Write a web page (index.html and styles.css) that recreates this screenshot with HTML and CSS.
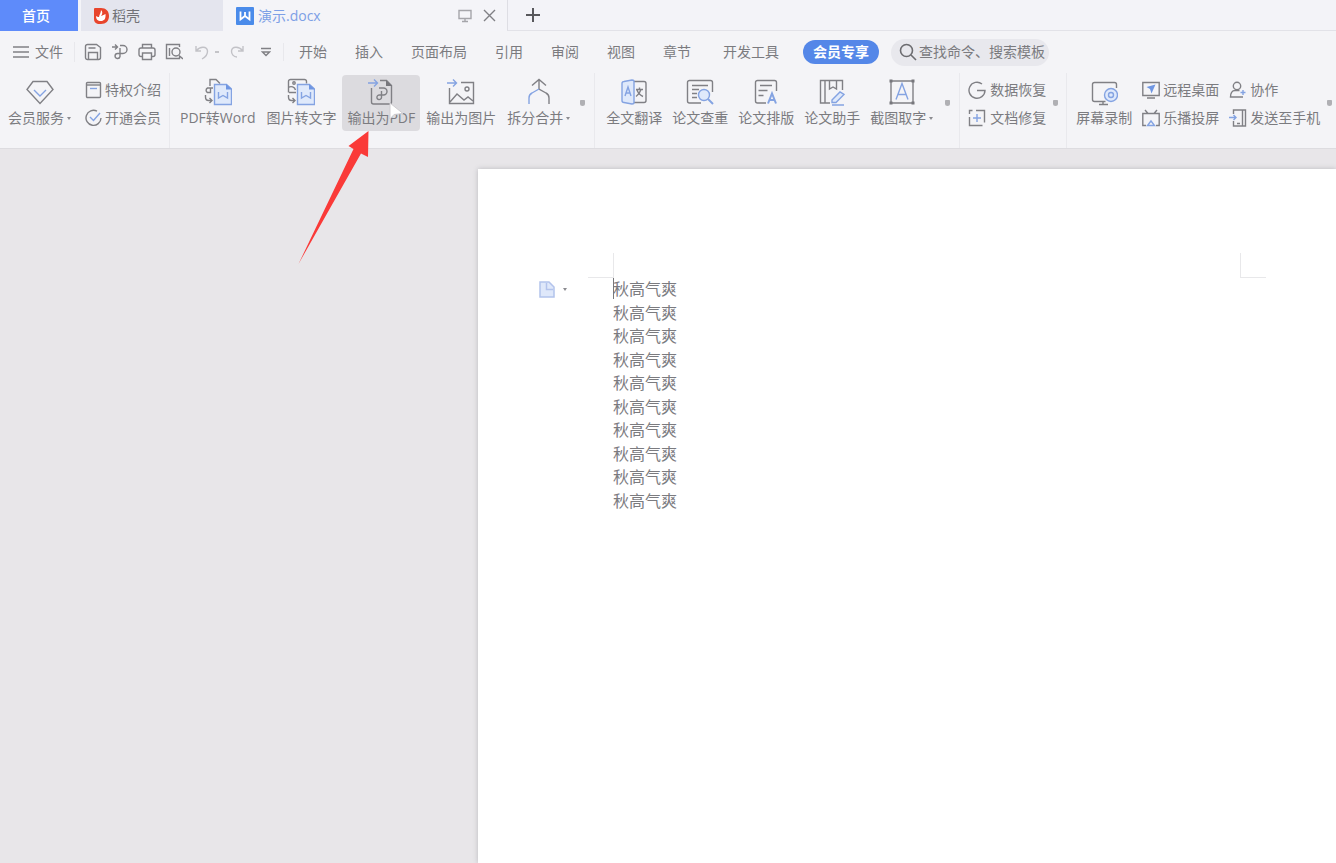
FILE: index.html
```html
<!DOCTYPE html>
<html lang="zh-CN">
<head>
<meta charset="utf-8">
<title>演示.docx</title>
<link rel="stylesheet" href="styles.css">
</head>
<body>
<div class="app">
  <header class="tabs">
    <button class="tab tab-home">首页</button>
    <button class="tab tab-docer">
      <svg width="16" height="18" viewBox="0 0 16 18"><path d="M2 1h6c5 0 8 3 8 8s-3 8-8 8H5a5 5 0 0 1-4-5V2a1 1 0 0 1 1-1z" fill="#e8452c"/><path d="M8 3c2 2 1.500 4 0 6 2-.5 3-1.500 4.500-2 .5 5-1.500 7-4.500 7-3.500 0-5-2-5-5 1 .8 2 1 3 1 .3-2.500 2-4 2-7z" fill="#fff"/></svg>
      <span>稻壳</span>
    </button>
    <div class="tab tab-doc">
      <svg width="18" height="18" viewBox="0 0 18 18"><rect width="18" height="18" rx="1" fill="#4a8bea"/><path d="M4.500 4.500v8l4.500-3.500 4.500 3.500v-8M9 5v4" fill="none" stroke="#fff" stroke-width="1.800"/></svg>
      <span class="tab-name">演示.docx</span>
      <button class="icon-btn" aria-label="窗口"><svg width="14" height="14" viewBox="0 0 14 14" class="ico light"><path d="M1 1.500h12v8H1zM7 10v2M4 12.500h6"/></svg></button>
      <button class="icon-btn" aria-label="关闭"><svg width="13" height="13" viewBox="0 0 13 13" class="ico"><path d="M1 1l11 11M12 1L1 12"/></svg></button>
    </div>
    <div class="tab-rest">
      <button class="icon-btn" aria-label="新建"><svg width="14" height="14" viewBox="0 0 14 14" class="ico bold"><path d="M7 0v14M0 7h14"/></svg></button>
    </div>
  </header>

  <nav class="menu">
    <button class="file-btn"><svg width="16" height="12" viewBox="0 0 16 12" class="ico"><path d="M0 1h16M0 6h16M0 11h16"/></svg><span>文件</span></button>
    <div class="quick">
      <button class="icon-btn" aria-label="保存"><svg width="18" height="18" viewBox="0 0 18 18" class="ico"><path d="M3.500 1.500h9l4 3v10a2 2 0 0 1-2 2h-11a2 2 0 0 1-2-2v-11a2 2 0 0 1 2-2zM4.500 16V9.500h9V16M4.500 5h7"/></svg></button>
      <button class="icon-btn" aria-label="输出为PDF"><svg width="18" height="18" viewBox="0 0 18 18" class="ico"><path d="M1 4h5M4 1.500L6.500 4 4 6.500M9 2.500h3a4 4 0 0 1 0 8H6.500a2.500 2.500 0 1 0 2.500 3V5"/></svg></button>
      <button class="icon-btn" aria-label="打印"><svg width="18" height="18" viewBox="0 0 18 18" class="ico"><path d="M4.500 5V1.500h9V5M4 13.500H3a2 2 0 0 1-2-2V7a2 2 0 0 1 2-2h12a2 2 0 0 1 2 2v4.500a2 2 0 0 1-2 2h-1M4.500 10h9v6.500h-9z"/></svg></button>
      <button class="icon-btn" aria-label="打印预览"><svg width="18" height="18" viewBox="0 0 18 18" class="ico"><path d="M14.500 4V1.500h-13v14h13v-2M14 12.500l4 3.500M4.500 5v8"/><circle cx="11" cy="9" r="4"/></svg></button>
      <button class="icon-btn undo" aria-label="撤销"><svg width="14" height="16" viewBox="0 0 14 16" class="ico faint"><path d="M1 2v5h5M1.500 6.500C5 2 12 2 12.500 7c.2 3-2 6-5.500 8"/></svg><i class="dot"></i></button>
      <button class="icon-btn redo" aria-label="重做"><svg width="14" height="16" viewBox="0 0 14 16" class="ico faint"><path d="M13 2v5H8M12.500 6.500C9 2 2 2 1.500 7c-.2 3 2 6 5.500 6"/></svg></button>
      <button class="icon-btn more" aria-label="更多"><svg width="10" height="10" viewBox="0 0 10 10" class="ico"><path d="M0 1.500h10M1.500 5L5 8.500 8.500 5z"/></svg></button>
    </div>
    <div class="menu-items">
      <button>开始</button><button>插入</button><button>页面布局</button><button>引用</button><button>审阅</button><button>视图</button><button>章节</button>
    </div>
    <button class="dev">开发工具</button>
    <button class="vip">会员专享</button>
    <label class="search">
      <svg width="18" height="18" viewBox="0 0 18 18" class="ico dark"><circle cx="7.500" cy="7.500" r="6"/><path d="M12 12l5 5"/></svg>
      <input type="text" placeholder="查找命令、搜索模板" aria-label="查找命令、搜索模板">
    </label>
  </nav>

  <section class="ribbon">
    <div class="group g-member">
      <button class="big">
        <svg width="28" height="28" viewBox="0 0 28 28" class="ico"><path d="M7 3.500h14l6 8-13 14-13-14z"/><path class="b" d="M8 12l6 6 6-6"/></svg>
        <span class="lbl">会员服务<i class="caret"></i></span>
      </button>
      <div class="col">
        <button class="small"><svg width="17" height="18" viewBox="0 0 17 18" class="ico"><rect x="1.500" y="1.500" width="14" height="15" rx="1"/><path d="M2 4h13"/><path class="b" d="M5 7.500h7"/></svg>特权介绍</button>
        <button class="small"><svg width="17" height="18" viewBox="0 0 17 18" class="ico"><path d="M12 2.200A7.500 7.500 0 1 0 16 9"/><path class="b" d="M5 8l3.500 3.500L15 4"/></svg>开通会员</button>
      </div>
    </div>

    <div class="group g-convert">
      <button class="big">
        <svg width="28" height="28" viewBox="0 0 28 28" class="ico"><path d="M6 8V1.500h6l4 4M9 10H3.500a2.500 2.500 0 0 0 0 4.500H6.500V10M1.500 17v2c0 2 1 3.500 3 3.500H8M5.500 20L8 22.500 5.500 25"/><path class="b f" d="M10.500 6.500h12l5 4.500v15.500h-17z"/><path class="b" d="M14.500 14v6l4.500-2.500 4.500 2.500v-6"/><path class="bf" d="M22 6l6 5.500h-6z"/></svg>
        <span class="lbl">PDF转Word</span>
      </button>
      <button class="big">
        <svg width="28" height="28" viewBox="0 0 28 28" class="ico"><path d="M19.500 5.500v-2a2 2 0 0 0-2-2h-14a2 2 0 0 0-2 2v6a4.500 4.500 0 0 1 7 2.500M2 14.500h7M1.500 9.500v5M1.500 17v2c0 2 1 3.500 3 3.500H8M5.500 20L8 22.500 5.500 25"/><circle cx="7" cy="5" r="1.200"/><path class="b f" d="M10.500 6.500h12l5 4.500v15.500h-17z"/><path class="b" d="M14.500 14v6l4.500-2.500 4.500 2.500v-6"/><path class="bf" d="M22 6l6 5.500h-6z"/></svg>
        <span class="lbl">图片转文字</span>
      </button>
      <button class="big active">
        <svg width="28" height="28" viewBox="0 0 28 28" class="ico"><path d="M4.500 10v14a2 2 0 0 0 2 2h16a2 2 0 0 0 2-2V7.500l-5-5H13"/><path class="df" d="M19 2l6 6h-6z"/><path d="M12 10h4.500a3.500 3.500 0 0 1 0 7h-4a2.300 2.300 0 1 0 2 2.500V13"/><path class="b" d="M1 5h9M7 1.500L10.500 5 7 8.500"/></svg>
        <span class="lbl">输出为PDF</span>
        <svg class="cursor" width="16" height="19" viewBox="0 0 16 19"><path d="M1 1v16l4-4.500 9-1z" fill="#fff" stroke="#cfcdd1" stroke-width="1"/></svg>
        <svg class="arrow" width="72" height="134" viewBox="0 0 72 134"><path d="M70.500 0L50.500 15l5 3L.5 133 63 22.500l7 3.500z" fill="#fa3a38"/></svg>
      </button>
      <button class="big">
        <svg width="28" height="28" viewBox="0 0 28 28" class="ico"><path d="M2.500 10v15.500h24V4.500H14M3 24l7-8 7 6 4-3 5 4"/><circle cx="20" cy="11" r="2"/><path class="b" d="M0 5h9M6 1.500L9.500 5 6 8.500"/></svg>
        <span class="lbl">输出为图片</span>
      </button>
      <button class="big">
        <svg width="28" height="28" viewBox="0 0 28 28" class="ico"><path d="M7 7.500l7-6 7 6M14 2v9l7 4c2 1 3 3 3 5v6"/><path class="b" d="M14 11l-7 4c-2 1-3 3-3 5v6"/></svg>
        <span class="lbl">拆分合并<i class="caret"></i></span>
      </button>
      <button class="marker" aria-label="更多"></button>
    </div>

    <div class="group g-paper">
      <button class="big">
        <svg width="28" height="28" viewBox="0 0 28 28" class="ico"><path d="M14 3.500h10a2 2 0 0 1 2 2v17a2 2 0 0 1-2 2H14M16 11.500h7M19.500 9.500v2M16 18.500c3-2 4-4 5-7M17 12c1 3 3 5 6 6.500"/><path class="b f" d="M4 3.500l8-1.500c1 0 2 .5 2 1.500v21c0 1-1 1.500-2 1.500l-8-1.500a2 2 0 0 1-2-2v-17a2 2 0 0 1 2-2z"/><path class="b" d="M5 18l3-9 3 9M6 15h4"/></svg>
        <span class="lbl">全文翻译</span>
      </button>
      <button class="big">
        <svg width="28" height="28" viewBox="0 0 28 28" class="ico"><path d="M26.500 14V4.500a2 2 0 0 0-2-2h-21a2 2 0 0 0-2 2V23a2 2 0 0 0 2 2H15M6 7.500h16M6 11.500h7M6 15.500h5M6 19.500h5"/><circle class="b f" cx="18" cy="17" r="5.500"/><path class="b thick" d="M22 21l5 5"/></svg>
        <span class="lbl">论文查重</span>
      </button>
      <button class="big">
        <svg width="28" height="28" viewBox="0 0 28 28" class="ico"><path d="M24.500 13V4.500a2 2 0 0 0-2-2h-17a2 2 0 0 0-2 2V23a2 2 0 0 0 2 2H14M8 7.500h12M6.500 12.500h9M6.500 17.500h5"/><path class="b thick" d="M16 25.500l4-10 4 10M17.500 22h5"/></svg>
        <span class="lbl">论文排版</span>
      </button>
      <button class="big">
        <svg width="28" height="28" viewBox="0 0 28 28" class="ico"><path d="M24.500 12V2.500h-22V25H12M7 3v22M11.500 3v8l3.500-2 3.500 2V3"/><path class="b f" d="M14 22l8-8 4 2.500-8 8h-4zM14 27h12"/></svg>
        <span class="lbl">论文助手</span>
      </button>
      <button class="big">
        <svg width="28" height="28" viewBox="0 0 28 28" class="ico"><path d="M3 3h22v22H3z"/><path class="df" d="M1.500 1.500h3v3h-3zM23.500 1.500h3v3h-3zM1.500 23.500h3v3h-3zM23.500 23.500h3v3h-3z"/><path class="b" d="M8 21.500l6-16 6 16M10 16.500h8"/></svg>
        <span class="lbl">截图取字<i class="caret"></i></span>
      </button>
      <button class="marker" aria-label="更多"></button>
    </div>

    <div class="group g-recover">
      <div class="col">
        <button class="small"><svg width="18" height="18" viewBox="0 0 18 18" class="ico"><path d="M14 3A8 8 0 1 0 17 9.500H9"/></svg>数据恢复</button>
        <button class="small"><svg width="18" height="18" viewBox="0 0 18 18" class="ico"><path d="M1.500 5V1.500h3M8 1.500h8.500v12M1.500 8v8.500h13"/><path class="b" d="M9 5v8M5 9h8"/></svg>文档修复</button>
      </div>
      <button class="marker" aria-label="更多"></button>
    </div>

    <div class="group g-share">
      <button class="big">
        <svg width="28" height="28" viewBox="0 0 28 28" class="ico"><path d="M26.500 10V6.500a2 2 0 0 0-2-2h-20a2 2 0 0 0-2 2v15a2 2 0 0 0 2 2h11M9 26.500h9M13 24v2"/><circle class="b f" cx="21" cy="17" r="6.500"/><circle class="b" cx="21" cy="17" r="2.500"/></svg>
        <span class="lbl">屏幕录制</span>
      </button>
      <div class="col">
        <button class="small"><svg width="18" height="18" viewBox="0 0 18 18" class="ico"><path d="M.8 1.500h16.400v13H.8zM5 17h8"/><path class="bf" d="M4.500 6l9-2.500-4 9-1.500-4.500z"/></svg>远程桌面</button>
        <button class="small"><svg width="18" height="18" viewBox="0 0 18 18" class="ico"><path d="M4 16.500H.8V4.500h16.400v12H14M3 1l3 3.500M15 1l-3 3.500"/><path class="b" d="M9 12l3.500 4.500h-7z"/></svg>乐播投屏</button>
      </div>
      <div class="col">
        <button class="small"><svg width="18" height="18" viewBox="0 0 18 18" class="ico"><circle cx="8" cy="5" r="3.700"/><path d="M10.500 9.500H6c-3 0-4.500 3-4.500 6.500H14"/><path class="b" d="M14 9v5M11.500 11.500h5"/></svg>协作</button>
        <button class="small"><svg width="18" height="18" viewBox="0 0 18 18" class="ico"><path d="M4.500 5V1h12v16h-12v-5M13.500 1v16M8 14.500h3"/><path class="b" d="M0 8.500h7M4.500 6L7 8.500 4.500 11"/></svg>发送至手机</button>
      </div>
      <button class="marker" aria-label="更多"></button>
    </div>
  </section>

  <main class="canvas">
    <article class="page">
      <div class="crops"><i class="crop left"></i><i class="crop right"></i></div>
      <div class="body">
        <button class="para" aria-label="段落选项">
          <svg width="16" height="17" viewBox="0 0 16 17"><path d="M1 1h9l5 5v10H1z" fill="#dfe8fa" stroke="#b3c3ec" stroke-width="1.500"/><path d="M7.500 2v6.500H14" fill="none" stroke="#b3c3ec" stroke-width="1.500"/></svg>
          <i class="caret"></i>
        </button>
        <div class="lines">
          <p class="first">秋高气爽</p><p>秋高气爽</p><p>秋高气爽</p><p>秋高气爽</p><p>秋高气爽</p><p>秋高气爽</p><p>秋高气爽</p><p>秋高气爽</p><p>秋高气爽</p><p>秋高气爽</p>
        </div>
      </div>
    </article>
  </main>
</div>
</body>
</html>
```
FILE: styles.css
```css
* { box-sizing: border-box; }
body {
  margin: 0;
  background: #e8e6e9;
  color: #7b7b7f;
  font: 14px/20px "Open Sans", "Noto Sans CJK SC", sans-serif;
}
button {
  margin: 0;
  padding: 0;
  border: 0;
  background: none;
  color: inherit;
  font: inherit;
  white-space: nowrap;
}
svg { display: block; flex: none; }
.app { display: flex; flex-direction: column; min-height: 100vh; overflow: hidden; }

.ico { fill: none; stroke: #808085; stroke-width: 1.4; }
.ico .b { stroke: #84a3e2; }
.ico .f { fill: #dfe9fb; }
.ico .bf { fill: #6f96e2; stroke: none; }
.ico .df { fill: #77777c; stroke: none; }
.ico .thick { stroke-width: 2; }
.ico.light { stroke: #a5a5aa; }
.ico.faint { stroke: #c2c2c7; }
.ico.dark { stroke: #6c6c70; stroke-width: 1.6; }
.ico.bold { stroke: #58585c; stroke-width: 2; }
.icon-btn { display: flex; align-items: center; }

.tabs { display: flex; height: 31px; background: #f4f4f8; }
.tab { display: flex; align-items: center; }
.tab-home { justify-content: center; width: 78px; margin-right: 3px; padding-right: 6px; background: #5e8bfa; color: #fff; font-weight: 500; }
.tab-docer { gap: 3px; width: 142px; padding-left: 12px; background: #e4e5ee; color: #727277; }
.tab-doc { gap: 4px; width: 284px; padding: 0 11px 0 13px; color: #7da0e6; }
.tab-name { flex: 1; }
.tab-doc .icon-btn + .icon-btn { margin-left: 7px; }
.tab-rest { display: flex; flex: 1; padding-left: 18px; border-left: 1px solid #dedee4; border-bottom: 1px solid #e2e2e8; background: #f3f3f8; }

.menu { display: flex; align-items: center; height: 42px; background: #f4f4f7; white-space: nowrap; }
.file-btn { display: flex; align-items: center; gap: 6px; padding: 0 11px 0 13px; border-right: 1px solid #e8e8ec; }
.quick { display: flex; align-items: center; gap: 9px; width: 209px; padding-left: 9px; border-right: 1px solid #e8e8ec; }
.undo { gap: 6px; margin-left: 3px; }
.redo { margin-left: 2px; }
.dot { width: 4px; height: 2px; background: #c4c4c8; }
.more { margin-left: 8px; }
.menu-items { display: flex; gap: 28px; padding-left: 15px; }
.dev { margin-left: 32px; }
.vip { height: 24px; margin-left: 24px; padding: 0 10px; border-radius: 12px; background: #5487e8; color: #fff; font-weight: 700; }
.search { display: flex; align-items: center; gap: 2px; width: 158px; height: 27px; margin-left: 12px; padding-left: 8px; border-radius: 14px; background: #e8e8ed; }
.search input { width: 128px; padding: 0; border: 0; outline: 0; background: none; color: inherit; font: inherit; }
.search input::placeholder { color: #7b7b7f; opacity: 1; }

.ribbon { display: flex; height: 76px; border-bottom: 1px solid #dddce0; background: #f4f4f7; }
.group { display: flex; align-items: flex-start; padding-top: 2px; border-right: 1px solid #e9e9ed; }
.group:last-child { border-right: 0; }
.big { position: relative; display: flex; flex-direction: column; align-items: center; height: 56px; padding: 3px 5px 0; border-radius: 4px; }
.big.active { background: #dcdbdf; }
.lbl { display: flex; align-items: center; line-height: 24px; }
.caret { width: 0; height: 0; margin-left: 3px; border: 2px solid transparent; border-top: 3px solid #8b8b90; border-bottom: 0; }
.col { display: flex; flex-direction: column; gap: 8px; padding-top: 5px; }
.small { display: flex; align-items: center; gap: 3px; }
.marker { width: 5px; height: 6px; margin-top: 25px; border-radius: 1px 1px 3px 3px; background: #b0b0b4; }
.g-member { padding-left: 3px; padding-right: 8px; }
.g-member .col { margin-left: 9px; }
.g-convert { gap: 1px; padding-left: 5px; padding-right: 9px; }
.g-convert .marker, .g-paper .marker { margin-left: 4px; }
.g-paper { padding-left: 6px; padding-right: 9px; }
.g-paper .marker { margin-left: 7px; }
.g-recover { padding-left: 8px; padding-right: 8px; }
.g-recover .small { gap: 4px; }
.g-recover .marker { margin-left: 7px; }
.g-share { padding-left: 4px; }
.g-share .col { margin-left: 5px; }
.g-share .col + .col { margin-left: 10px; }
.g-share .marker { margin-left: 7px; }
.cursor { position: absolute; left: 47px; top: 27px; }
.arrow { position: absolute; z-index: 2; right: 50px; top: 56px; }

.canvas { display: flex; flex: 1; padding: 20px 0 0 478px; }
.page { flex: 1; padding: 84px 70px 0 61px; background: #fff; box-shadow: 0 0 5px #b9b8bd; clip-path: inset(-8px 0 0 -8px); }
.crops { display: flex; justify-content: space-between; padding-left: 49px; }
.crop { width: 26px; height: 25px; border-bottom: 1px solid #e8e8ea; }
.crop.left { border-right: 1px solid #e8e8ea; }
.crop.right { border-left: 1px solid #e8e8ea; }
.body { display: flex; align-items: flex-start; }
.para { display: flex; align-items: center; gap: 5px; width: 74px; height: 22px; }
.lines { display: grid; grid-auto-rows: 1fr; height: 235px; font-size: 16px; line-height: 23px; }
.lines p { margin: 0; }
.first { position: relative; }
.first::before { content: ""; position: absolute; left: 0; top: 0; width: 1px; height: 21px; background: #77777a; }
```
